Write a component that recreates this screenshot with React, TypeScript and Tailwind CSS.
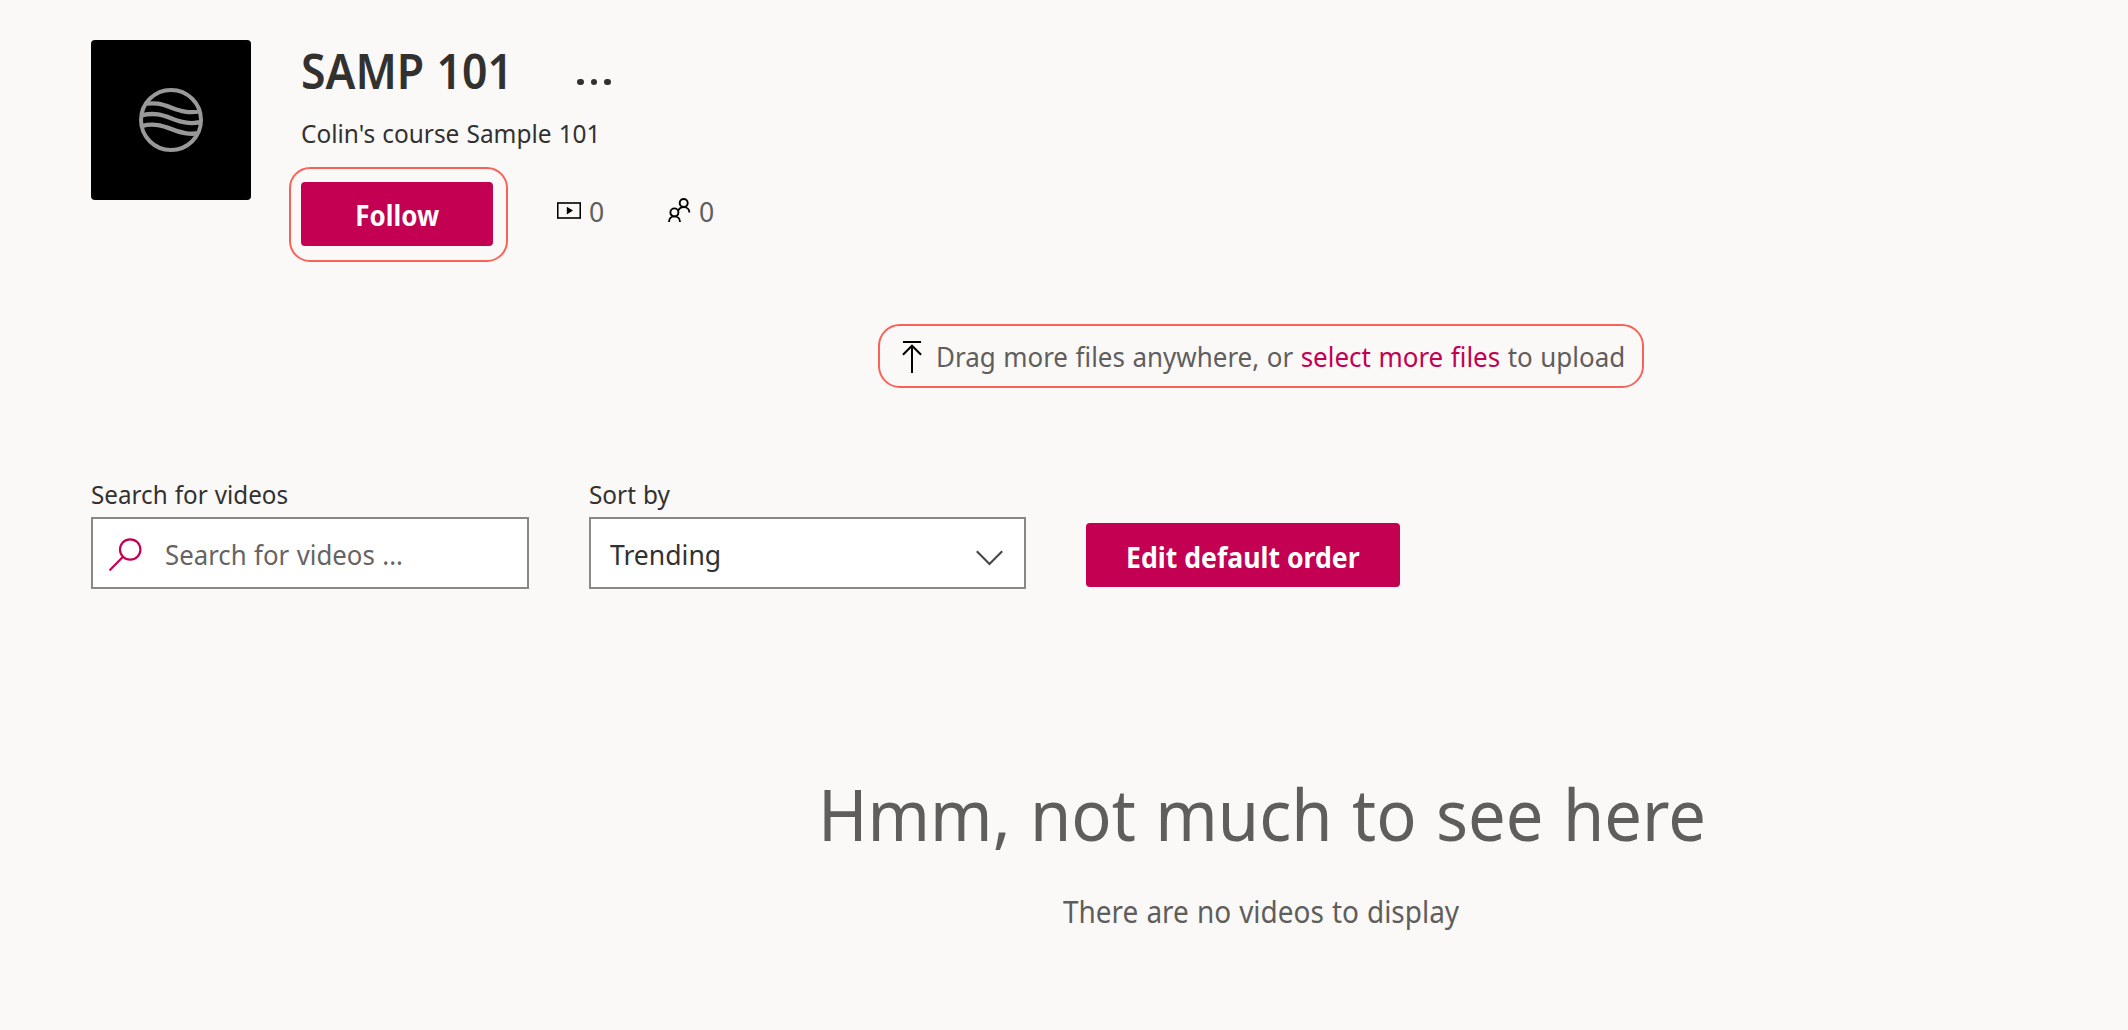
function WavesLogo() {
  return (
    <svg className="size-16" viewBox="0 0 192 192" fill="none" stroke="#999999">
      <defs>
        <clipPath id="disc">
          <circle cx="96" cy="96" r="86" />
        </clipPath>
      </defs>
      <circle cx="96" cy="96" r="90" strokeWidth="12" />
      <g clipPath="url(#disc)" strokeWidth="13">
        <path d="M5 51C84 29 108 87 188 69" />
        <path d="M5 83C84 61 108 119 188 102" />
        <path d="M5 115C84 93 108 151 188 134" />
      </g>
    </svg>
  );
}

function VideoIcon() {
  return (
    <svg className="h-[17px] w-6" viewBox="0 0 24 17">
      <rect x="0.75" y="1" width="22.5" height="15" fill="none" stroke="#000" strokeWidth="1.6" />
      <path d="M9.8 4.8v7.6l6.2-3.8z" fill="#000" />
    </svg>
  );
}

function PeopleIcon() {
  return (
    <svg className="h-6 w-[23px]" viewBox="0 0 23 24" fill="none" stroke="#000" strokeWidth="1.9">
      <circle cx="15.7" cy="5" r="4" />
      <circle cx="6.4" cy="14.4" r="4" />
      <path d="M1 24C1 20.6 3.2 18.4 6.4 18.4S12 20.6 12 24" />
      <path d="M10.2 12.6C11.2 10.3 13.2 9.1 15.7 9.1C19 9.1 21.4 11.4 21.4 14.6" />
    </svg>
  );
}

function UploadIcon() {
  return (
    <svg className="h-8 w-5" viewBox="0 0 20 32" fill="none" stroke="#000" strokeWidth="2">
      <path d="M1 1h18M10 5v27M0.9 13.8L10 4.7l9.1 9.1" />
    </svg>
  );
}

function SearchIcon() {
  return (
    <svg className="size-[33px]" viewBox="0 0 33 33" fill="none" stroke="#c30052" strokeWidth="2.2">
      <circle cx="21.2" cy="11.5" r="10.2" />
      <path d="M14 18.8L1.2 31.8" strokeLinecap="round" />
    </svg>
  );
}

function ChevronIcon() {
  return (
    <svg className="h-4 w-[27px]" viewBox="0 0 27 16" fill="none" stroke="#484644" strokeWidth="2.1">
      <path d="M0.8 1.2L13.5 14l12.7-12.8" />
    </svg>
  );
}

export default function App() {
  return (
    <div className="h-[1030px] w-[2128px] overflow-hidden bg-[#faf9f8] pt-10 pl-[91px] font-['Noto_Sans',sans-serif] text-[28px] leading-[38px] [word-spacing:0.03em] text-[#323130]">
      <header className="flex h-[222px] items-start">
        <div className="flex size-40 items-center justify-center rounded bg-black">
          <WavesLogo />
        </div>

        <div className="-mt-px ml-[38px]">
          <div className="ml-3 flex h-[76px] items-start">
            <h1 className="w-[276px] origin-left scale-x-[.928] text-[48px] leading-[64px] font-semibold whitespace-nowrap">
              SAMP 101
            </h1>
            <button className="mt-[39.5px] flex gap-[7.2px]" aria-label="More actions">
              <i className="size-[6.5px] rounded-full bg-[#323130]" />
              <i className="size-[6.5px] rounded-full bg-[#323130]" />
              <i className="size-[6.5px] rounded-full bg-[#323130]" />
            </button>
          </div>
          <p className="ml-3 w-[340px] origin-left scale-x-[.939] text-[26px] leading-9 whitespace-nowrap">
            Colin&apos;s course Sample 101
          </p>

          <div className="mt-4 flex h-[95px] items-start">
            <div className="h-[95px] w-[219px] rounded-[21px] border-2 border-[#fb6257] pt-[13px] pl-2.5">
              <button className="flex h-16 w-48 items-center justify-center rounded bg-[#c30052] pt-0.5 font-bold text-white">
                <span className="scale-x-[.927]">Follow</span>
              </button>
            </div>
            <div className="mt-[25px] ml-[49px] flex w-28 items-start text-[#605e5c]">
              <div className="mt-2.5 mr-2 flex">
                <VideoIcon />
              </div>
              <span className="origin-left scale-x-[.95]">0</span>
            </div>
            <div className="mt-[25px] -ml-px flex items-start text-[#605e5c]">
              <div className="mt-1.5 mr-2 flex">
                <PeopleIcon />
              </div>
              <span className="origin-left scale-x-[.95]">0</span>
            </div>
          </div>
        </div>
      </header>

      <div className="mt-[62px] ml-[787px] flex h-16 w-[766px] items-start rounded-[22px] border-2 border-[#fb6257] pt-[11px] pl-[22px] text-[#605e5c]">
        <div className="mt-1 mr-[13.5px] flex">
          <UploadIcon />
        </div>
        <p className="origin-left scale-x-[.927] whitespace-nowrap">
          Drag more files anywhere, or <a className="text-[#c30052]">select more files</a> to upload
        </p>
      </div>

      <div className="mt-[88px] flex items-start">
        <label className="w-[438px]">
          <span className="block origin-left scale-x-[.931] text-[26px] leading-9">Search for videos</span>
          <div className="mt-[5px] flex h-[72px] items-center border-2 border-[#8a8886] bg-white pl-4">
            <div className="mt-[3px] flex">
              <SearchIcon />
            </div>
            <span className="mt-0.5 ml-[23px] origin-left scale-x-[.921] text-[#666462]">Search for videos ...</span>
          </div>
        </label>

        <label className="ml-[60px] w-[437px]">
          <span className="block origin-left scale-x-[.937] text-[26px] leading-9">Sort by</span>
          <div className="mt-[5px] flex h-[72px] items-center justify-between border-2 border-[#8a8886] bg-white pr-[21px] pl-[19px]">
            <span className="mt-0.5 origin-left scale-x-[.948]">Trending</span>
            <div className="mt-2.5 flex">
              <ChevronIcon />
            </div>
          </div>
        </label>

        <button className="mt-[47px] ml-[60px] flex h-16 w-[314px] items-center justify-center rounded bg-[#c30052] pt-[3px] font-bold text-white">
          <span className="scale-x-[.951] whitespace-nowrap">Edit default order</span>
        </button>
      </div>

      <section className="mt-[175px] text-[#605e5c]">
        <h2 className="ml-[727px] w-[1100px] origin-left scale-x-[.929] text-[72px] leading-[98px] [word-spacing:0.03em] whitespace-nowrap">
          Hmm, not much to see here
        </h2>
        <p className="mt-[29px] ml-[972px] w-[800px] origin-left scale-x-[.932] text-[30px] leading-[41px] whitespace-nowrap">
          There are no videos to display
        </p>
      </section>
    </div>
  );
}
